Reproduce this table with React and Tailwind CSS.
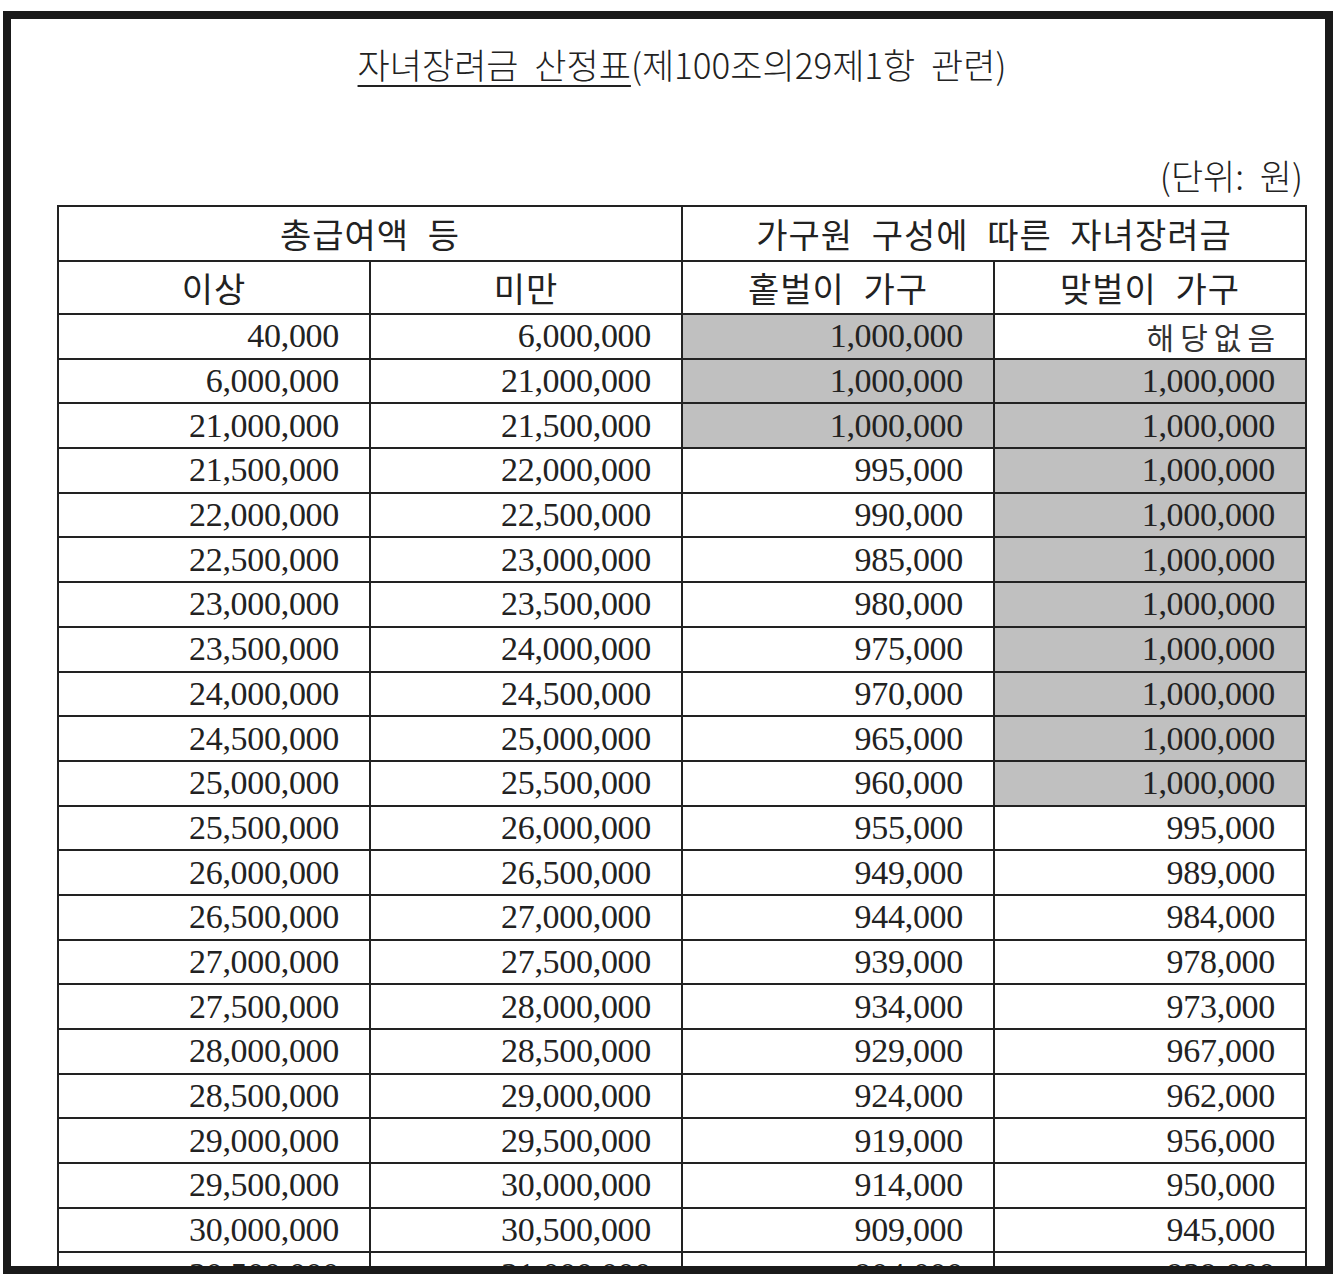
import React from 'react';

const KR = "font-['Noto_Sans_CJK_KR',sans-serif]";
const NUM = "font-['Liberation_Serif','Times_New_Roman',serif]";

// [이상, 미만, 홑벌이, 맞벌이, 홑벌이 음영, 맞벌이 음영]
const rows = [
  ['40,000', '6,000,000', '1,000,000', '해당없음', true, false],
  ['6,000,000', '21,000,000', '1,000,000', '1,000,000', true, true],
  ['21,000,000', '21,500,000', '1,000,000', '1,000,000', true, true],
  ['21,500,000', '22,000,000', '995,000', '1,000,000', false, true],
  ['22,000,000', '22,500,000', '990,000', '1,000,000', false, true],
  ['22,500,000', '23,000,000', '985,000', '1,000,000', false, true],
  ['23,000,000', '23,500,000', '980,000', '1,000,000', false, true],
  ['23,500,000', '24,000,000', '975,000', '1,000,000', false, true],
  ['24,000,000', '24,500,000', '970,000', '1,000,000', false, true],
  ['24,500,000', '25,000,000', '965,000', '1,000,000', false, true],
  ['25,000,000', '25,500,000', '960,000', '1,000,000', false, true],
  ['25,500,000', '26,000,000', '955,000', '995,000', false, false],
  ['26,000,000', '26,500,000', '949,000', '989,000', false, false],
  ['26,500,000', '27,000,000', '944,000', '984,000', false, false],
  ['27,000,000', '27,500,000', '939,000', '978,000', false, false],
  ['27,500,000', '28,000,000', '934,000', '973,000', false, false],
  ['28,000,000', '28,500,000', '929,000', '967,000', false, false],
  ['28,500,000', '29,000,000', '924,000', '962,000', false, false],
  ['29,000,000', '29,500,000', '919,000', '956,000', false, false],
  ['29,500,000', '30,000,000', '914,000', '950,000', false, false],
  ['30,000,000', '30,500,000', '909,000', '945,000', false, false],
  ['30,500,000', '31,000,000', '904,000', '939,000', false, false],
];

const COLS = 'grid grid-cols-[310px_312px_312px_312px] grid-rows-[minmax(0,1fr)]';

const Cell = ({ children, shaded, first, kr }) => (
  <div
    className={`min-h-0 flex items-center justify-end pr-[30px] ${first ? '' : 'border-l-2 border-[#222]'} ${shaded ? 'bg-[#c0c0c0]' : 'bg-white'}`}
  >
    {kr ? (
      <span className={`${KR} text-[30px] leading-[38px] tracking-[6px] text-[#333] mr-[-6px]`}>{children}</span>
    ) : (
      <span className={`${NUM} text-[34px] leading-none text-[#222] tracking-[-0.3px]`}>{children}</span>
    )}
  </div>
);

export default function App() {
  return (
    <div className="w-[1339px] h-[1282px] bg-white pt-[11px] pl-[3px]">
      <div className="w-[1330px] h-[1263px] border-8 border-[#1a1a1a] overflow-hidden bg-white">
        <div className="pl-[46px] pr-[18px]">
          {/* 제목 */}
          <div className={`${KR} h-[98px] pt-[24px] text-center text-[35px] leading-[42px] text-[#222] font-light [word-spacing:8px]`}>
            <span className="underline underline-offset-[6px] decoration-[1.5px]">자녀장려금 산정표</span>
            <span>(제100조의29제1항 관련)</span>
          </div>
          <div className={`${KR} h-[88px] pt-[38px] text-right pr-[4px] text-[35px] leading-[40px] text-[#222] font-light [word-spacing:8px]`}>
            (단위: 원)
          </div>

          {/* 표 */}
          <div className="w-[1250px] border-x-2 border-t-2 border-[#222]">
            <div className="grid grid-cols-[622px_624px] h-[55px] border-b-2 border-[#222]">
              <div className={`${KR} flex items-center justify-center text-[34px] text-[#222] [word-spacing:10px] tracking-[1px]`}>
                총급여액 등
              </div>
              <div className={`${KR} flex items-center justify-center border-l-2 border-[#222] text-[34px] text-[#222] [word-spacing:10px] tracking-[1px]`}>
                가구원 구성에 따른 자녀장려금
              </div>
            </div>
            <div className={`${COLS} h-[53px] border-b-2 border-[#222]`}>
              {['이상', '미만', '홑벌이 가구', '맞벌이 가구'].map((t, i) => (
                <div
                  key={t}
                  className={`${KR} flex items-center justify-center text-[34px] text-[#222] [word-spacing:10px] tracking-[1px] ${i ? 'border-l-2 border-[#222]' : ''}`}
                >
                  {t}
                </div>
              ))}
            </div>
            {rows.map((r) => (
              <div key={r[0]} className={`${COLS} h-[44.7px] border-b-2 border-[#222]`}>
                <Cell first>{r[0]}</Cell>
                <Cell>{r[1]}</Cell>
                <Cell shaded={r[4]}>{r[2]}</Cell>
                <Cell shaded={r[5]} kr={r[3] === '해당없음'}>{r[3]}</Cell>
              </div>
            ))}
          </div>
        </div>
      </div>
    </div>
  );
}
